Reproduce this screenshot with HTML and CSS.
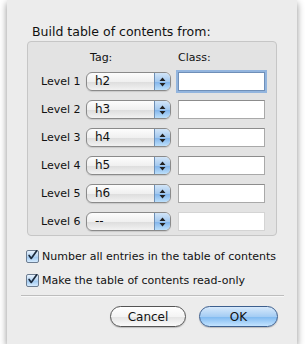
FILE: index.html
```html
<!DOCTYPE html>
<html lang="en">
<head>
    <meta charset="UTF-8">
    <title>Table of Contents</title>
    <link rel="stylesheet" href="styles.css">
</head>
<body>
    <div class="dialog">
        <div class="title">Build table of contents from:</div>

        <div class="group">
            <div class="grid">
                <span></span>
                <span class="head tag">Tag:</span>
                <span class="head">Class:</span>

                <span class="level">Level 1</span>
                <div class="popup"><span class="val">h2</span><span class="arrows"><svg width="7" height="10" viewBox="0 0 7 10"><path d="M3.5 0.5 L6.5 4 L0.5 4 Z M3.5 9.5 L6.5 6 L0.5 6 Z" fill="#222"/></svg></span></div>
                <div class="field focus"></div>

                <span class="level">Level 2</span>
                <div class="popup"><span class="val">h3</span><span class="arrows"><svg width="7" height="10" viewBox="0 0 7 10"><path d="M3.5 0.5 L6.5 4 L0.5 4 Z M3.5 9.5 L6.5 6 L0.5 6 Z" fill="#222"/></svg></span></div>
                <div class="field"></div>

                <span class="level">Level 3</span>
                <div class="popup"><span class="val">h4</span><span class="arrows"><svg width="7" height="10" viewBox="0 0 7 10"><path d="M3.5 0.5 L6.5 4 L0.5 4 Z M3.5 9.5 L6.5 6 L0.5 6 Z" fill="#222"/></svg></span></div>
                <div class="field"></div>

                <span class="level">Level 4</span>
                <div class="popup"><span class="val">h5</span><span class="arrows"><svg width="7" height="10" viewBox="0 0 7 10"><path d="M3.5 0.5 L6.5 4 L0.5 4 Z M3.5 9.5 L6.5 6 L0.5 6 Z" fill="#222"/></svg></span></div>
                <div class="field"></div>

                <span class="level">Level 5</span>
                <div class="popup"><span class="val">h6</span><span class="arrows"><svg width="7" height="10" viewBox="0 0 7 10"><path d="M3.5 0.5 L6.5 4 L0.5 4 Z M3.5 9.5 L6.5 6 L0.5 6 Z" fill="#222"/></svg></span></div>
                <div class="field"></div>

                <span class="level">Level 6</span>
                <div class="popup"><span class="val">--</span><span class="arrows"><svg width="7" height="10" viewBox="0 0 7 10"><path d="M3.5 0.5 L6.5 4 L0.5 4 Z M3.5 9.5 L6.5 6 L0.5 6 Z" fill="#222"/></svg></span></div>
                <div class="field disabled"></div>
            </div>
        </div>

        <div class="checks">
            <label class="check">
                <span class="box"><svg width="13" height="13" viewBox="0 0 13 13"><path d="M2.5 6.5 L5 10 L11.5 1" fill="none" stroke="#1b2a3c" stroke-width="2" stroke-linecap="round" stroke-linejoin="round"/></svg></span>
                Number all entries in the table of contents
            </label>
            <label class="check">
                <span class="box"><svg width="13" height="13" viewBox="0 0 13 13"><path d="M2.5 6.5 L5 10 L11.5 1" fill="none" stroke="#1b2a3c" stroke-width="2" stroke-linecap="round" stroke-linejoin="round"/></svg></span>
                Make the table of contents read-only
            </label>
        </div>

        <div class="sep"></div>

        <div class="buttons">
            <button class="btn">Cancel</button>
            <button class="btn default">OK</button>
        </div>
    </div>
</body>
</html>
```

FILE: styles.css
```css
body {
    margin: 0;
    background: #fff;
    font-family: "DejaVu Sans", "Liberation Sans", sans-serif;
    font-size: 11px;
    color: #111;
}
.dialog {
    margin-left: 7px;
    width: 290px;
    height: 344px;
    box-sizing: border-box;
    background: #ececec;
    box-shadow: 0 3px 7px rgba(0,0,0,0.45);
    padding-top: 24px;
}
.title {
    margin-left: 25px;
    font-size: 12.5px;
    line-height: 15px;
}
.group {
    margin: 2px 0 0 20px;
    width: 250px;
    height: 195px;
    box-sizing: border-box;
    border: 1px solid #c6c6c6;
    border-radius: 4px;
    background: #e3e3e3;
    padding: 10px 0 0 13px;
}
.grid {
    display: grid;
    grid-template-columns: 38px 85px 87px;
    grid-template-rows: 11px repeat(6, 19px);
    column-gap: 7px;
    row-gap: 9px;
    align-items: center;
}
.head.tag {
    padding-left: 4px;
}
.level {
    white-space: nowrap;
}
.popup {
    height: 19px;
    box-sizing: border-box;
    border: 1px solid #8a8a8a;
    border-radius: 6px;
    background: linear-gradient(#fdfdfd, #f0f0f0 50%, #dcdcdc 51%, #f2f2f2);
    display: flex;
    overflow: hidden;
    box-shadow: 0 1px 1px rgba(0,0,0,0.12);
}
.popup .val {
    flex: 1;
    padding-left: 8px;
    line-height: 17px;
    font-size: 12px;
}
.popup .arrows {
    width: 15px;
    border-left: 1px solid #6d8fb5;
    background: linear-gradient(#d2e5f8, #a4c9ef 50%, #7eb2ea 51%, #bde0fb);
    display: flex;
    align-items: center;
    justify-content: center;
}
.field {
    height: 19px;
    box-sizing: border-box;
    background: #fff;
    border: 1px solid #a9a9a9;
    border-top-color: #8c8c8c;
}
.field.focus {
    border-color: #6f8fb8;
    box-shadow: 0 0 0 2px rgba(120,165,220,0.75);
}
.field.disabled {
    border-color: #d4d4d4;
}
.checks {
    margin: 12px 0 0 19px;
}
.check {
    display: flex;
    align-items: center;
    gap: 3px;
    height: 16px;
    margin-bottom: 8px;
    white-space: nowrap;
}
.check:last-child {
    margin-bottom: 7px;
}
.box {
    width: 13px;
    height: 13px;
    box-sizing: border-box;
    border: 1px solid #6c7c90;
    border-radius: 2px;
    background: linear-gradient(#e9f3fd, #b4d4f3 50%, #9cc6ef 51%, #d5ebfe);
    display: flex;
}
.box svg {
    margin: -2px 0 0 0;
}
.sep {
    margin: 0 13px 0 14px;
    border-top: 1px solid #bdbdbd;
    border-bottom: 1px solid #f8f8f8;
}
.buttons {
    display: flex;
    justify-content: flex-end;
    gap: 13px;
    margin: 9px 19px 0 0;
}
.btn {
    height: 21px;
    border-radius: 11px;
    border: 1px solid #555;
    font-family: inherit;
    font-size: 12px;
    padding: 0;
    background: linear-gradient(#fff, #f4f4f4 50%, #e3e3e3 51%, #fafafa);
    box-shadow: 0 1px 1px rgba(0,0,0,0.2);
    width: 76px;
    color: #111;
}
.btn.default {
    width: 79px;
    border-color: #3d5f8e;
    background: linear-gradient(#d7e9fb, #a5cdf4 50%, #7db8f0 51%, #c4e4ff);
}
```
